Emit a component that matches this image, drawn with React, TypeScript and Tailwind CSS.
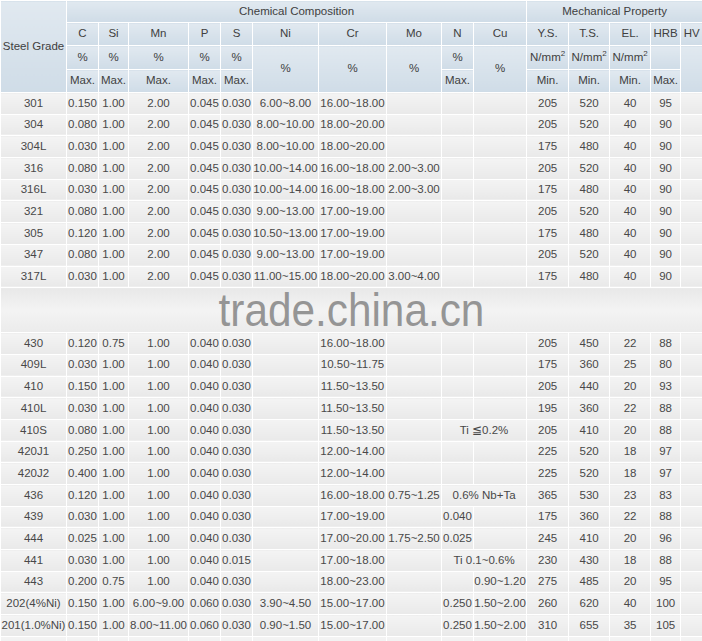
import React from "react";

type Cell = string | { t: string; span: number };

const widths = [66, 32, 30, 60, 32, 32, 66, 68, 55, 32, 53, 42, 41, 41, 30, 22];

const sec1: Cell[][] = [
  ["301", "0.150", "1.00", "2.00", "0.045", "0.030", "6.00~8.00", "16.00~18.00", "", "", "", "205", "520", "40", "95", ""],
  ["304", "0.080", "1.00", "2.00", "0.045", "0.030", "8.00~10.00", "18.00~20.00", "", "", "", "205", "520", "40", "90", ""],
  ["304L", "0.030", "1.00", "2.00", "0.045", "0.030", "8.00~10.00", "18.00~20.00", "", "", "", "175", "480", "40", "90", ""],
  ["316", "0.080", "1.00", "2.00", "0.045", "0.030", "10.00~14.00", "16.00~18.00", "2.00~3.00", "", "", "205", "520", "40", "90", ""],
  ["316L", "0.030", "1.00", "2.00", "0.045", "0.030", "10.00~14.00", "16.00~18.00", "2.00~3.00", "", "", "175", "480", "40", "90", ""],
  ["321", "0.080", "1.00", "2.00", "0.045", "0.030", "9.00~13.00", "17.00~19.00", "", "", "", "205", "520", "40", "90", ""],
  ["305", "0.120", "1.00", "2.00", "0.045", "0.030", "10.50~13.00", "17.00~19.00", "", "", "", "175", "480", "40", "90", ""],
  ["347", "0.080", "1.00", "2.00", "0.045", "0.030", "9.00~13.00", "17.00~19.00", "", "", "", "205", "520", "40", "90", ""],
  ["317L", "0.030", "1.00", "2.00", "0.045", "0.030", "11.00~15.00", "18.00~20.00", "3.00~4.00", "", "", "175", "480", "40", "90", ""],
];

const sec2: Cell[][] = [
  ["430", "0.120", "0.75", "1.00", "0.040", "0.030", "", "16.00~18.00", "", "", "", "205", "450", "22", "88", ""],
  ["409L", "0.030", "1.00", "1.00", "0.040", "0.030", "", "10.50~11.75", "", "", "", "175", "360", "25", "80", ""],
  ["410", "0.150", "1.00", "1.00", "0.040", "0.030", "", "11.50~13.50", "", "", "", "205", "440", "20", "93", ""],
  ["410L", "0.030", "1.00", "1.00", "0.040", "0.030", "", "11.50~13.50", "", "", "", "195", "360", "22", "88", ""],
  ["410S", "0.080", "1.00", "1.00", "0.040", "0.030", "", "11.50~13.50", "", { t: "Ti \u22660.2%", span: 2 }, "205", "410", "20", "88", ""],
  ["420J1", "0.250", "1.00", "1.00", "0.040", "0.030", "", "12.00~14.00", "", "", "", "225", "520", "18", "97", ""],
  ["420J2", "0.400", "1.00", "1.00", "0.040", "0.030", "", "12.00~14.00", "", "", "", "225", "520", "18", "97", ""],
  ["436", "0.120", "1.00", "1.00", "0.040", "0.030", "", "16.00~18.00", "0.75~1.25", { t: "0.6% Nb+Ta", span: 2 }, "365", "530", "23", "83", ""],
  ["439", "0.030", "1.00", "1.00", "0.040", "0.030", "", "17.00~19.00", "", "0.040", "", "175", "360", "22", "88", ""],
  ["444", "0.025", "1.00", "1.00", "0.040", "0.030", "", "17.00~20.00", "1.75~2.50", "0.025", "", "245", "410", "20", "96", ""],
  ["441", "0.030", "1.00", "1.00", "0.040", "0.015", "", "17.00~18.00", "", { t: "Ti 0.1~0.6%", span: 2 }, "230", "430", "18", "88", ""],
  ["443", "0.200", "0.75", "1.00", "0.040", "0.030", "", "18.00~23.00", "", "", "0.90~1.20", "275", "485", "20", "95", ""],
  ["202(4%Ni)", "0.150", "1.00", "6.00~9.00", "0.060", "0.030", "3.90~4.50", "15.00~17.00", "", "0.250", "1.50~2.00", "260", "620", "40", "100", ""],
  ["201(1.0%Ni)", "0.150", "1.00", "8.00~11.00", "0.060", "0.030", "0.90~1.50", "15.00~17.00", "", "0.250", "1.50~2.00", "310", "655", "35", "105", ""],
  ["", "", "", "", "", "", "", "", "", "", "", "", "", "", "", ""],
];

const th =
  "border border-white p-0 font-normal text-center align-middle whitespace-nowrap bg-linear-to-b from-[#e1e9f0] to-[#cfdce7] text-[#404040]";
const td =
  "border border-white p-0 text-center align-middle whitespace-nowrap bg-linear-to-b from-[#f4f4f4] to-[#e9e9e9] text-[#484848]";

function DataRow({ row }: { row: Cell[] }) {
  return (
    <tr className="h-[21.7px]">
      {row.map((c, i) =>
        typeof c === "string" ? (
          <td key={i} className={td}>
            {c}
          </td>
        ) : (
          <td key={i} colSpan={c.span} className={td}>
            {c.t}
          </td>
        )
      )}
    </tr>
  );
}

function NMM() {
  return (
    <span>
      N/mm<sup className="text-[8px] -top-[5px]">2</sup>
    </span>
  );
}

export default function App() {
  return (
    <div className="w-[702px] h-[641px] overflow-hidden bg-white font-['Liberation_Sans',Arial,sans-serif] text-[11.5px] leading-none">
      <table className="table-fixed border-collapse w-[702px]">
        <colgroup>
          {widths.map((w, i) => (
            <col key={i} style={{ width: w }} />
          ))}
        </colgroup>
        <thead>
          <tr className="h-[22px]">
            <th rowSpan={4} className={th}>
              Steel Grade
            </th>
            <th colSpan={10} className={th}>
              Chemical Composition
            </th>
            <th colSpan={5} className={th}>
              Mechanical Property
            </th>
          </tr>
          <tr className="h-[23px]">
            {["C", "Si", "Mn", "P", "S", "Ni", "Cr", "Mo", "N", "Cu", "Y.S.", "T.S.", "EL.", "HRB", "HV"].map((t) => (
              <th key={t} className={th}>
                {t}
              </th>
            ))}
          </tr>
          <tr className="h-[24px]">
            <th className={th}>%</th>
            <th className={th}>%</th>
            <th className={th}>%</th>
            <th className={th}>%</th>
            <th className={th}>%</th>
            <th rowSpan={2} className={th}>%</th>
            <th rowSpan={2} className={th}>%</th>
            <th rowSpan={2} className={th}>%</th>
            <th className={th}>%</th>
            <th rowSpan={2} className={th}>%</th>
            <th className={th}>
              <NMM />
            </th>
            <th className={th}>
              <NMM />
            </th>
            <th className={th}>
              <NMM />
            </th>
            <th className={th}></th>
            <th rowSpan={2} className={th}></th>
          </tr>
          <tr className="h-[23px]">
            <th className={th}>Max.</th>
            <th className={th}>Max.</th>
            <th className={th}>Max.</th>
            <th className={th}>Max.</th>
            <th className={th}>Max.</th>
            <th className={th}>Max.</th>
            <th className={th}>Min.</th>
            <th className={th}>Min.</th>
            <th className={th}>Min.</th>
            <th className={th}>Max.</th>
          </tr>
        </thead>
        <tbody>
          {sec1.map((r, i) => (
            <DataRow key={"a" + i} row={r} />
          ))}
          <tr>
            <td
              colSpan={16}
              className="p-0 bg-linear-to-b from-[#e8e8e8] via-[#f3f3f3] to-[#ebebeb]"
            >
              <div className="h-[44px] flex items-center justify-center">
                <span className="block text-[46px] leading-[44px] text-[#959595] scale-x-[0.92]">
                  trade.china.cn
                </span>
              </div>
            </td>
          </tr>
          {sec2.map((r, i) => (
            <DataRow key={"b" + i} row={r} />
          ))}
        </tbody>
      </table>
    </div>
  );
}
